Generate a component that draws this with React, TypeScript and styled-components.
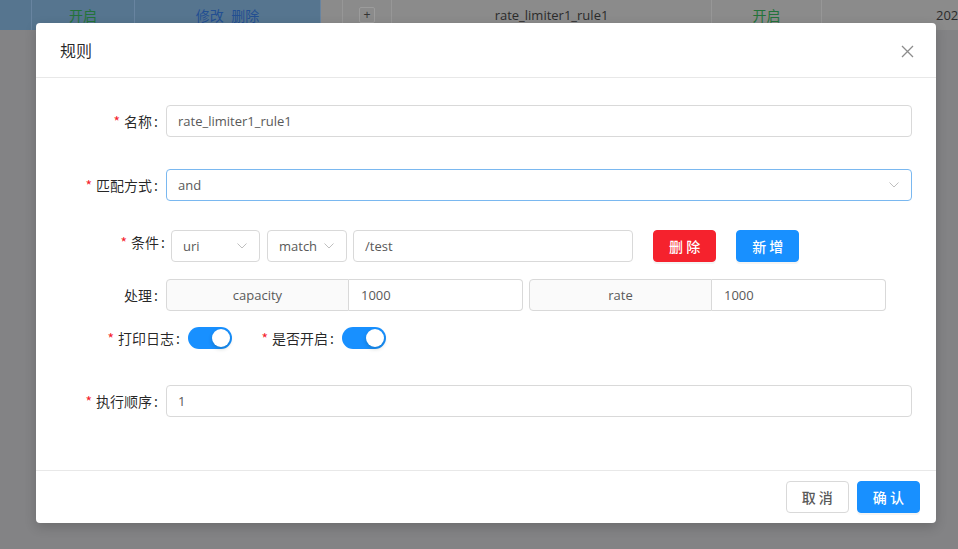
import React from 'react';
import styled, { createGlobalStyle } from 'styled-components';

const GlobalStyle = createGlobalStyle`
  html, body { margin: 0; padding: 0; }
  body {
    font-family: "Open Sans", "Noto Sans CJK SC", sans-serif;
    background: #838385;
    overflow: hidden;
  }
  * { box-sizing: border-box; }
`;

const Page = styled.div`
  position: relative;
  width: 958px;
  height: 549px;
  overflow: hidden;
  background: #838385;
`;

const TableRow = styled.div`
  display: flex;
  height: 30px;
  background: #8b8b8b;
`;

const Cell = styled.div<{ $w: number; $sel?: boolean; $pl?: number }>`
  flex: 0 0 ${(p) => p.$w}px;
  display: flex;
  align-items: center;
  justify-content: ${(p) => (p.$pl !== undefined ? 'flex-start' : 'center')};
  padding-left: ${(p) => p.$pl ?? 0}px;
  background: ${(p) => (p.$sel ? '#56758f' : '#8b8b8b')};
  border-right: 1px solid ${(p) => (p.$sel ? '#6884a0' : '#979797')};
  font-size: 13px;
  white-space: nowrap;
  overflow: hidden;
  color: #2b2b2b;
`;

const CellText = styled.span<{ $tone?: 'green' | 'blue' }>`
  color: ${(p) => (p.$tone === 'green' ? '#23733a' : p.$tone === 'blue' ? '#234f92' : '#2b2b2b')};
  font-size: ${(p) => (p.$tone ? '14px' : '13px')};
  word-spacing: 4px;
`;

const ExpandBox = styled.span`
  width: 16px;
  height: 16px;
  border: 1px solid #9c9c9c;
  border-radius: 2px;
  display: flex;
  align-items: center;
  justify-content: center;
  font-size: 12px;
  line-height: 1;
  color: #333;
  font-family: "Liberation Sans", sans-serif;
`;

const Modal = styled.div`
  position: absolute;
  top: 23px;
  left: 36px;
  width: 900px;
  background: #fff;
  border-radius: 4px;
  box-shadow: 0 4px 12px rgba(0, 0, 0, 0.18);
  display: flex;
  flex-direction: column;
`;

const Header = styled.div`
  display: flex;
  align-items: center;
  justify-content: space-between;
  height: 55px;
  padding: 0 22px 0 24px;
  border-bottom: 1px solid #e8e8e8;
`;

const Title = styled.div`
  font-size: 16px;
  line-height: 22px;
  color: rgba(0, 0, 0, 0.85);
  font-family: "Noto Sans CJK SC", sans-serif;
`;

const CloseIcon = styled.svg`
  width: 13px;
  height: 13px;
  margin-top: 2px;
`;

const Body = styled.div`
  padding: 27px 24px 53px 24px;
  display: flex;
  flex-direction: column;
`;

const FormRow = styled.div<{ $mt: number; $top?: boolean }>`
  display: flex;
  align-items: ${(p) => (p.$top ? 'flex-start' : 'center')};
  height: 32px;
  margin-top: ${(p) => p.$mt}px;
`;

const Label = styled.label<{ $w: number; $pr?: number; $h?: number }>`
  flex: 0 0 ${(p) => p.$w}px;
  height: ${(p) => p.$h ?? 32}px;
  display: flex;
  align-items: center;
  justify-content: flex-end;
  padding-right: ${(p) => p.$pr ?? 8}px;
  font-size: 14px;
  line-height: 20px;
  color: rgba(0, 0, 0, 0.85);
  font-family: "Noto Sans CJK SC", sans-serif;
  white-space: nowrap;
`;

const Star = styled.span`
  color: #f5222d;
  margin-right: 4px;
  font-size: 14px;
`;

const Colon = styled.span`
  margin-left: 2px;
`;

const Input = styled.div<{ $w?: number; $focus?: boolean; $ml?: number }>`
  ${(p) => (p.$w ? `flex: 0 0 ${p.$w}px;` : 'flex: 1;')}
  height: 32px;
  margin-left: ${(p) => p.$ml ?? 0}px;
  border: 1px solid ${(p) => (p.$focus ? '#7ab8f0' : '#d9d9d9')};
  border-radius: 4px;
  padding: 0 12px 0 11px;
  display: flex;
  align-items: center;
  justify-content: space-between;
  font-size: 13px;
  color: #595959;
  background: #fff;
`;

const Chevron = styled.svg`
  width: 10px;
  height: 6px;
  flex: 0 0 auto;
`;

const ControlGroup = styled.div`
  display: flex;
  align-items: center;
`;

const Btn = styled.button<{ $kind: 'danger' | 'primary' | 'default'; $ml?: number }>`
  height: 32px;
  padding: 0 15px;
  margin-left: ${(p) => p.$ml ?? 0}px;
  border-radius: 4px;
  font-size: 14px;
  font-family: "Noto Sans CJK SC", sans-serif;
  font-weight: 500;
  cursor: pointer;
  border: 1px solid
    ${(p) => (p.$kind === 'danger' ? '#f5222d' : p.$kind === 'primary' ? '#1890ff' : '#d9d9d9')};
  background: ${(p) => (p.$kind === 'danger' ? '#f5222d' : p.$kind === 'primary' ? '#1890ff' : '#fff')};
  color: ${(p) => (p.$kind === 'default' ? '#595959' : '#fff')};
  white-space: pre;
  box-shadow: ${(p) => (p.$kind === 'default' ? 'none' : '0 2px 0 rgba(0,0,0,0.045)')};
`;

const InputGroup = styled.div<{ $ml?: number }>`
  display: flex;
  height: 32px;
  margin-left: ${(p) => p.$ml ?? 0}px;
`;

const Addon = styled.div`
  flex: 0 0 183px;
  border: 1px solid #d9d9d9;
  border-radius: 4px 0 0 4px;
  background: #fafafa;
  display: flex;
  align-items: center;
  justify-content: center;
  font-size: 13px;
  color: #595959;
`;

const GroupInput = styled.div`
  flex: 0 0 174px;
  border: 1px solid #d9d9d9;
  border-left: none;
  border-radius: 0 4px 4px 0;
  display: flex;
  align-items: center;
  padding-left: 12px;
  font-size: 13px;
  color: #595959;
`;

const Switch = styled.div`
  flex: 0 0 44px;
  width: 44px;
  height: 22px;
  border-radius: 11px;
  background: #1890ff;
  display: flex;
  align-items: center;
  justify-content: flex-end;
  padding-right: 2px;
`;

const Knob = styled.span`
  width: 18px;
  height: 18px;
  border-radius: 50%;
  background: #fff;
  box-shadow: 0 2px 4px rgba(0, 35, 11, 0.2);
`;

const Footer = styled.div`
  display: flex;
  justify-content: flex-end;
  gap: 8px;
  padding: 10px 16px;
  border-top: 1px solid #e8e8e8;
`;

const Down = () => (
  <Chevron viewBox="0 0 10 6">
    <path d="M0.5 0.5 L5 5 L9.5 0.5" fill="none" stroke="#bfbfbf" strokeWidth="1" />
  </Chevron>
);

const Req = ({ text }: { text: string }) => (
  <>
    <Star>*</Star>
    {text}
    <Colon>:</Colon>
  </>
);

export default function App() {
  return (
    <Page>
      <GlobalStyle />
      <TableRow>
        <Cell $w={32} $sel />
        <Cell $w={103} $sel>
          <CellText $tone="green">开启</CellText>
        </Cell>
        <Cell $w={186} $sel>
          <CellText $tone="blue">修改 删除</CellText>
        </Cell>
        <Cell $w={22} />
        <Cell $w={49}>
          <ExpandBox>+</ExpandBox>
        </Cell>
        <Cell $w={320}>
          <CellText>rate_limiter1_rule1</CellText>
        </Cell>
        <Cell $w={110}>
          <CellText $tone="green">开启</CellText>
        </Cell>
        <Cell $w={160} $pl={114}>
          <CellText>2021</CellText>
        </Cell>
      </TableRow>

      <Modal>
        <Header>
          <Title>规则</Title>
          <CloseIcon viewBox="0 0 13 13">
            <path d="M1 1 L12 12 M12 1 L1 12" stroke="#8c8c8c" strokeWidth="1.3" fill="none" />
          </CloseIcon>
        </Header>

        <Body>
          <FormRow $mt={0}>
            <Label $w={106}>
              <Req text="名称" />
            </Label>
            <Input>rate_limiter1_rule1</Input>
          </FormRow>

          <FormRow $mt={32}>
            <Label $w={106}>
              <Req text="匹配方式" />
            </Label>
            <Input $focus>
              and
              <Down />
            </Input>
          </FormRow>

          <FormRow $mt={29} $top>
            <Label $w={111} $pr={6} $h={24}>
              <Req text="条件" />
            </Label>
            <ControlGroup>
              <Input $w={89}>
                uri
                <Down />
              </Input>
              <Input $w={80} $ml={7}>
                match
                <Down />
              </Input>
              <Input $w={280} $ml={6}>
                /test
              </Input>
              <Btn $kind="danger" $ml={20}>删 除</Btn>
              <Btn $kind="primary" $ml={20}>新 增</Btn>
            </ControlGroup>
          </FormRow>

          <FormRow $mt={17}>
            <Label $w={106} $h={28}>
              处理<Colon>:</Colon>
            </Label>
            <InputGroup>
              <Addon>capacity</Addon>
              <GroupInput>1000</GroupInput>
            </InputGroup>
            <InputGroup $ml={6}>
              <Addon>rate</Addon>
              <GroupInput>1000</GroupInput>
            </InputGroup>
          </FormRow>

          <FormRow $mt={11}>
            <Label $w={128}>
              <Req text="打印日志" />
            </Label>
            <Switch>
              <Knob />
            </Switch>
            <Label $w={110}>
              <Req text="是否开启" />
            </Label>
            <Switch>
              <Knob />
            </Switch>
          </FormRow>

          <FormRow $mt={31}>
            <Label $w={106}>
              <Req text="执行顺序" />
            </Label>
            <Input>1</Input>
          </FormRow>
        </Body>

        <Footer>
          <Btn $kind="default">取 消</Btn>
          <Btn $kind="primary">确 认</Btn>
        </Footer>
      </Modal>
    </Page>
  );
}
